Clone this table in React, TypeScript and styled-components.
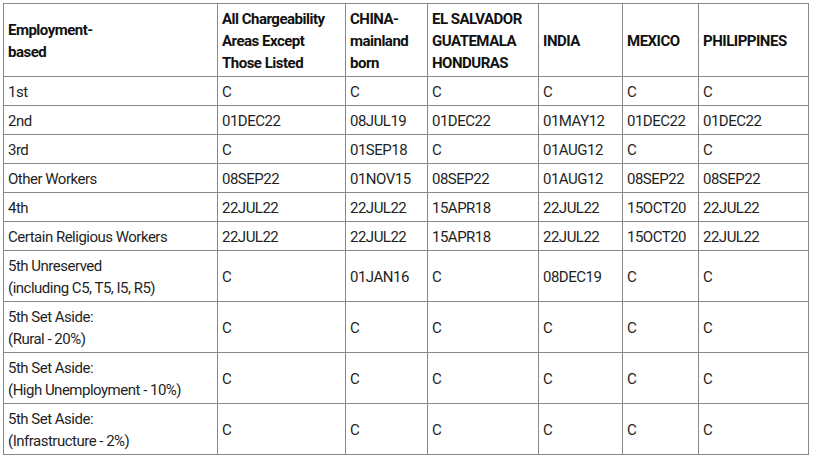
import React from 'react';
import styled, { createGlobalStyle } from 'styled-components';

const GlobalStyle = createGlobalStyle`
    html, body {
        margin: 0;
        padding: 0;
        background: #ffffff;
    }
`;

const Page = styled.div`
    padding: 3px 0 0 3px;
`;

const Table = styled.table`
    border-collapse: collapse;
    table-layout: fixed;
    width: 806px;
    font-family: Roboto, 'Liberation Sans', sans-serif;
    font-size: 15px;
    letter-spacing: -0.5px;
    line-height: 22px;
    color: #1f1f1f;
`;

const HeadCell = styled.th`
    border: 1px solid #888888;
    padding: 4px 4px 2px;
    text-align: left;
    vertical-align: middle;
    font-weight: 700;
    color: #111111;
`;

const Cell = styled.td`
    border: 1px solid #888888;
    padding: 4px 4px 2px;
    text-align: left;
    vertical-align: middle;
    font-weight: 400;
`;

const columns = [
    { width: 214, label: <>Employment-<br />based</> },
    { width: 128, label: <>All Chargeability<br />Areas Except<br />Those Listed</> },
    { width: 82, label: <>CHINA-<br />mainland<br />born</> },
    { width: 111, label: <>EL SALVADOR<br />GUATEMALA<br />HONDURAS</> },
    { width: 84, label: 'INDIA' },
    { width: 76, label: 'MEXICO' },
    { width: 110, label: 'PHILIPPINES' },
];

type Row = { name: React.ReactNode; values: string[] };

const rows: Row[] = [
    { name: '1st', values: ['C', 'C', 'C', 'C', 'C', 'C'] },
    { name: '2nd', values: ['01DEC22', '08JUL19', '01DEC22', '01MAY12', '01DEC22', '01DEC22'] },
    { name: '3rd', values: ['C', '01SEP18', 'C', '01AUG12', 'C', 'C'] },
    { name: 'Other Workers', values: ['08SEP22', '01NOV15', '08SEP22', '01AUG12', '08SEP22', '08SEP22'] },
    { name: '4th', values: ['22JUL22', '22JUL22', '15APR18', '22JUL22', '15OCT20', '22JUL22'] },
    { name: 'Certain Religious Workers', values: ['22JUL22', '22JUL22', '15APR18', '22JUL22', '15OCT20', '22JUL22'] },
    { name: <>5th Unreserved<br />(including C5, T5, I5, R5)</>, values: ['C', '01JAN16', 'C', '08DEC19', 'C', 'C'] },
    { name: <>5th Set Aside:<br />(Rural - 20%)</>, values: ['C', 'C', 'C', 'C', 'C', 'C'] },
    { name: <>5th Set Aside:<br />(High Unemployment - 10%)</>, values: ['C', 'C', 'C', 'C', 'C', 'C'] },
    { name: <>5th Set Aside:<br />(Infrastructure - 2%)</>, values: ['C', 'C', 'C', 'C', 'C', 'C'] },
];

const App = () => {
    return (
        <>
            <GlobalStyle />
            <Page>
                <Table>
                    <colgroup>
                        {columns.map((c, i) => (
                            <col key={i} style={{ width: c.width }} />
                        ))}
                    </colgroup>
                    <thead>
                        <tr>
                            {columns.map((c, i) => (
                                <HeadCell key={i}>{c.label}</HeadCell>
                            ))}
                        </tr>
                    </thead>
                    <tbody>
                        {rows.map((r, i) => (
                            <tr key={i}>
                                <Cell>{r.name}</Cell>
                                {r.values.map((v, j) => (
                                    <Cell key={j}>{v}</Cell>
                                ))}
                            </tr>
                        ))}
                    </tbody>
                </Table>
            </Page>
        </>
    );
};

export default App;
